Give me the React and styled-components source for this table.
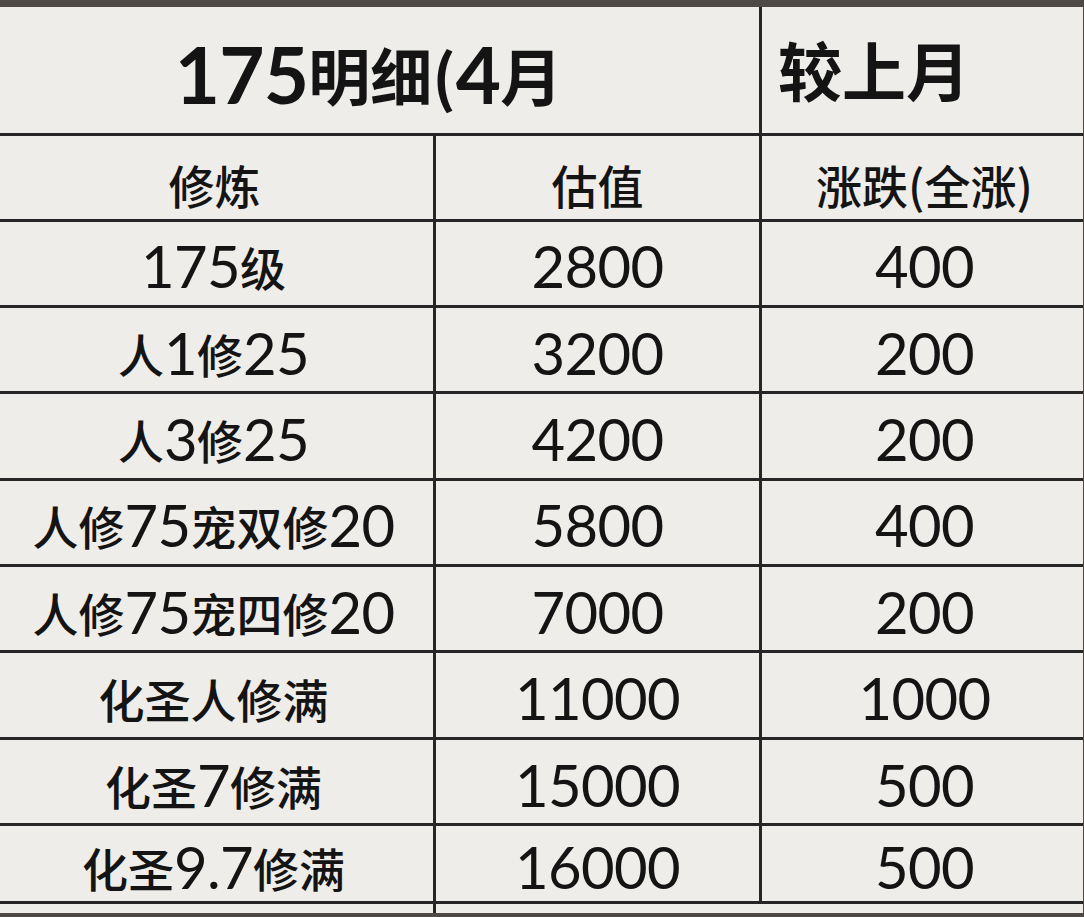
import React from "react";
import styled, { createGlobalStyle } from "styled-components";

const GlobalStyle = createGlobalStyle`
  html, body {
    margin: 0;
    padding: 0;
    background: #4e4944;
  }
  body {
    font-family: "Noto Sans CJK SC", "Noto Sans", sans-serif;
    color: #141414;
  }
`;

const rows = [
  ["175级", "2800", "400"],
  ["人1修25", "3200", "200"],
  ["人3修25", "4200", "200"],
  ["人修75宠双修20", "5800", "400"],
  ["人修75宠四修20", "7000", "200"],
  ["化圣人修满", "11000", "1000"],
  ["化圣7修满", "15000", "500"],
  ["化圣9.7修满", "16000", "500"],
];

const Sheet = styled.div`
  margin-top: 7px;
  width: 1083px;
  height: 906px;
  background: #efede9;
  display: grid;
  grid-template-columns: 436px 326px 1fr;
  grid-template-rows: 129px 85.5px repeat(7, 86.4px) 78px 1fr;
  overflow: hidden;
`;

const Cell = styled.div`
  box-sizing: border-box;
  grid-column: span ${(p) => p.$span || 1};
  display: flex;
  align-items: center;
  justify-content: ${(p) => (p.$left ? "flex-start" : "center")};
  padding: ${(p) => p.$pad || "6px 0 0 0"};
  border-right: ${(p) => (p.$noRight ? "none" : "3px solid #262626")};
  border-bottom: ${(p) => (p.$noBottom ? "none" : "3px solid #262626")};
  font-size: ${(p) => p.$size || 46}px;
  font-weight: ${(p) => p.$weight || 500};
  white-space: nowrap;
  line-height: 1;
`;

const Num = styled.span`
  font-family: "Lato", "Noto Sans", sans-serif;
  font-size: 1.26em;
  font-weight: ${(p) => (p.$bold ? 700 : 400)};
  letter-spacing: -0.01em;
`;

// split text so digits use the latin face, CJK stays in Noto
const Mixed = ({ text, bold }) =>
  text.split(/([0-9.]+)/).map((part, i) =>
    /^[0-9.]+$/.test(part) ? (
      <Num key={i} $bold={bold}>
        {part}
      </Num>
    ) : (
      <span key={i}>{part}</span>
    )
  );

export default function App() {
  return (
    <>
      <GlobalStyle />
      <Sheet>
        {/* title row */}
        <Cell $span={2} $size={62} $weight={700} $pad="8px 22px 0 0">
          <Mixed text="175明细(4月" bold />
        </Cell>
        <Cell $noRight $left $size={64} $weight={700} $pad="0 0 4px 16px">
          较上月
        </Cell>

        {/* header row */}
        <Cell $pad="14px 4px 0 0">修炼</Cell>
        <Cell $pad="14px 0 0 0">估值</Cell>
        <Cell $noRight $pad="14px 0 0 4px">
          涨跌(全涨)
        </Cell>

        {rows.map(([name, value, diff]) => (
          <React.Fragment key={name}>
            <Cell $pad="6px 6px 0 0">
              <Mixed text={name} />
            </Cell>
            <Cell>
              <Mixed text={value} />
            </Cell>
            <Cell $noRight $pad="6px 0 0 4px">
              <Mixed text={diff} />
            </Cell>
          </React.Fragment>
        ))}

        {/* cut-off row at the bottom */}
        <Cell $noBottom />
        <Cell $noBottom $noRight />
        <Cell $noBottom $noRight />
      </Sheet>
    </>
  );
}
